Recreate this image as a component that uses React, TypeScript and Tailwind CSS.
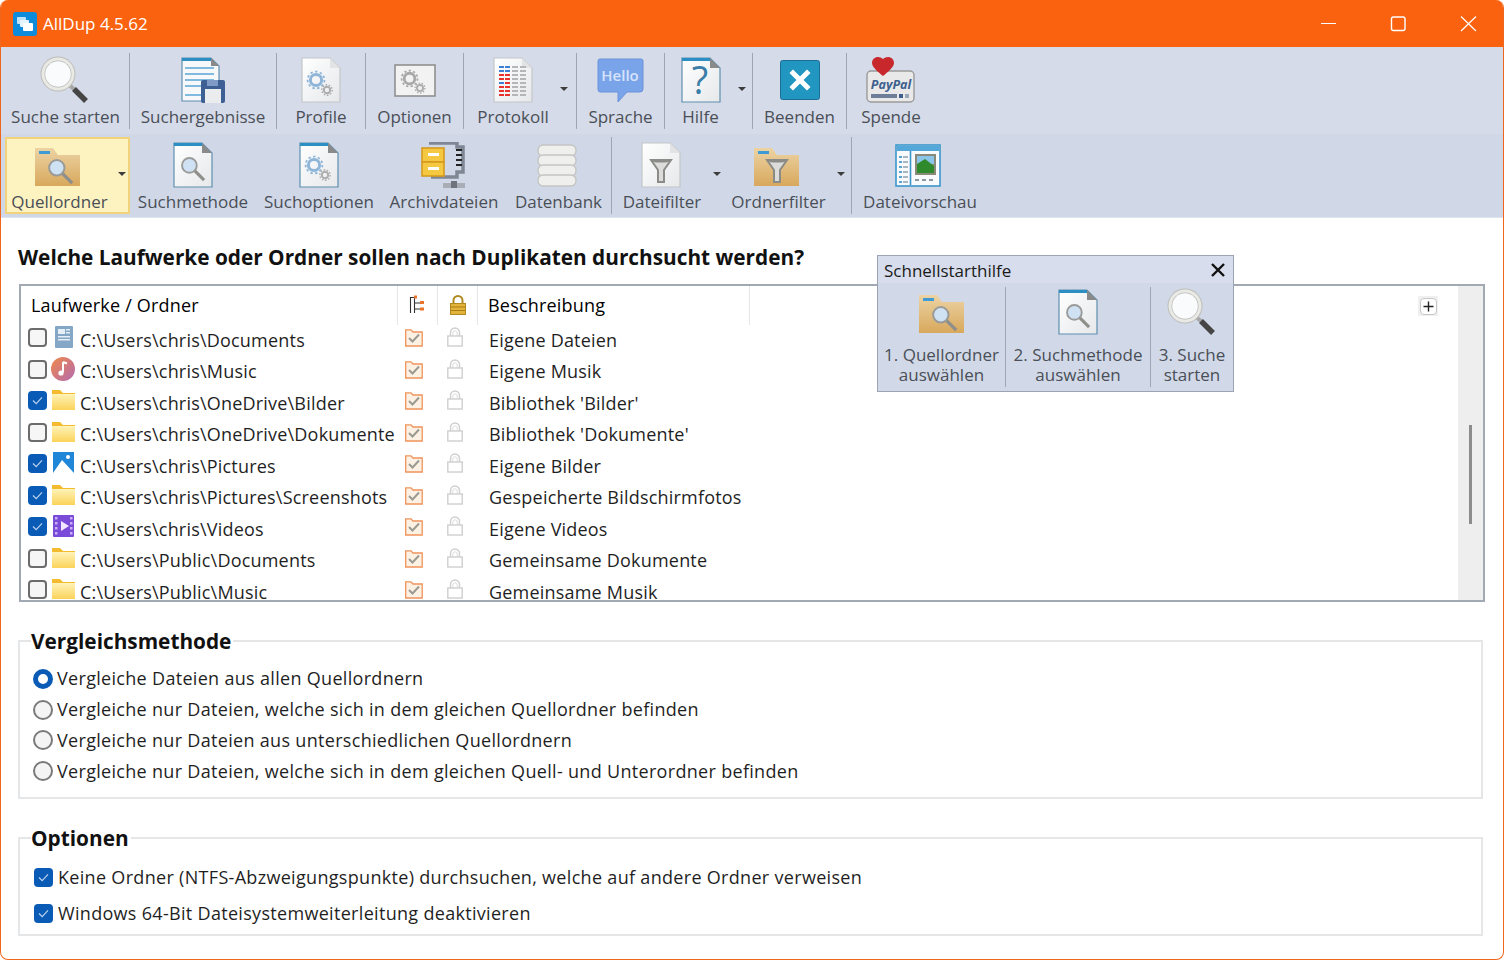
import React from "react";

// ---- toolbar icons ----
const Magnifier = ({ s = 50 }: { s?: number }) => (
  <svg width={s} height={s} viewBox="0 0 50 50">
    <line x1="28" y1="29" x2="35" y2="35" stroke="#a8a8a8" strokeWidth="4" />
    <line x1="34" y1="34" x2="46" y2="46" stroke="#454545" strokeWidth="5.5" />
    <circle cx="18" cy="19" r="17.5" fill="#bdbdb9" />
    <circle cx="18" cy="19" r="16.5" fill="#e9e9e6" />
    <circle cx="18" cy="19" r="13.5" fill="#b9b9b6" />
    <circle cx="18" cy="19" r="12.8" fill="#fafbfc" />
  </svg>
);

const MiniGlass = ({ x, y, k = 1 }: { x: number; y: number; k?: number }) => (
  <g transform={`translate(${x} ${y}) scale(${k})`}>
    <line x1="13" y1="13" x2="22" y2="22" stroke="#8e8e8a" strokeWidth="3" />
    <circle cx="8" cy="8" r="7" fill="#cfe2f4" stroke="#9a9a98" strokeWidth="1.8" />
  </g>
);

const Gears = ({ x, y, c = "#8fb6d8", k = 1 }: { x: number; y: number; c?: string; k?: number }) => (
  <g transform={`translate(${x} ${y}) scale(${k})`} fill="none">
    <circle cx="9" cy="9" r="5.6" stroke={c} strokeWidth="3" />
    <circle cx="9" cy="9" r="8.4" stroke={c} strokeWidth="1.8" strokeDasharray="2.4 2.4" />
    <circle cx="20" cy="19" r="3.2" stroke="#adadad" strokeWidth="2" />
    <circle cx="20" cy="19" r="5.2" stroke="#adadad" strokeWidth="1.4" strokeDasharray="1.6 1.6" />
  </g>
);

const PageBase = ({ blue = false, children }: { blue?: boolean; children?: React.ReactNode }) => (
  <svg width="40" height="46" viewBox="0 0 40 46">
    <defs>
      <linearGradient id="pg" x1="0" y1="0" x2="1" y2="1">
        <stop offset="0" stopColor="#ffffff" />
        <stop offset="1" stopColor="#e6e8ea" />
      </linearGradient>
    </defs>
    <path d="M1 1H29L39 11V45H1Z" fill="url(#pg)" stroke={blue ? "#5f8fb0" : "#c4c6c8"} strokeWidth="1.2" />
    {blue && <rect x="1" y="1" width="28" height="3" fill="#2c8fc4" />}
    <path d="M29 1L39 11H29Z" fill={blue ? "#8a8a8a" : "#e2e3e5"} />
    {children}
  </svg>
);

const FolderBase = ({ children }: { children?: React.ReactNode }) => (
  <svg className="mt-[4px]" width="46" height="39" viewBox="0 0 46 39">
    <defs>
      <linearGradient id="fd" x1="0" y1="0" x2="0" y2="1">
        <stop offset="0" stopColor="#ecd3a4" />
        <stop offset="1" stopColor="#d8a85c" />
      </linearGradient>
    </defs>
    <path d="M0 0H18L23 7H45V38H0Z" fill="url(#fd)" />
    <rect x="4" y="3" width="11" height="3" fill="#3f9bd6" />
    {children}
  </svg>
);

const Funnel = ({ x, y }: { x: number; y: number }) => (
  <g transform={`translate(${x} ${y})`}>
    <path d="M0 1H20L13 11V23H7V11Z" fill="#dcdcda" stroke="#8b8b88" strokeWidth="2" />
    <ellipse cx="10" cy="2" rx="9" ry="1.6" fill="#8b8b88" />
  </g>
);

const IconSave = () => (
  <svg width="44" height="46" viewBox="0 0 44 46">
    <path d="M1 1H30L38 9V44H1Z" fill="#f7f8f9" stroke="#5f8fb0" strokeWidth="1.2" />
    <rect x="1" y="1" width="29" height="3" fill="#2c8fc4" />
    <path d="M30 1L38 9H30Z" fill="#8a8a8a" />
    {[11, 17, 23, 29, 38].map((y) => (
      <line key={y} x1="4" y1={y} x2={y > 30 ? 20 : 33} y2={y} stroke="#58a6d4" strokeWidth="1.5" />
    ))}
    <rect x="20" y="23" width="24" height="23" rx="2" fill="#3d5f94" />
    <rect x="26" y="23" width="11" height="6" fill="#7f9ac6" />
    <rect x="24" y="32" width="16" height="14" fill="#ebecee" />
  </svg>
);

const IconOptions = () => (
  <svg width="42" height="33" viewBox="0 0 42 33">
    <rect x="1" y="1" width="40" height="31" fill="#f2f2f2" stroke="#8f8f8f" strokeWidth="1.6" />
    <Gears x={7} y={6} c="#a8a8a8" k={0.95} />
  </svg>
);

const IconLog = () => (
  <PageBase>
    {[9, 13, 17, 21, 25, 29, 33, 37].map((y, i) => (
      <g key={y}>
        <rect x="6" y={y} width="5" height="2" fill={i < 2 || i === 4 ? "#3b7fd6" : "#e8322c"} />
        <rect x="12" y={y} width="5" height="2" fill={i < 2 ? "#3b7fd6" : "#e8322c"} />
        <rect x="19" y={y} width="6" height="2" fill="#b6b6b6" />
        <rect x="27" y={y} width="6" height="2" fill="#b6b6b6" />
      </g>
    ))}
  </PageBase>
);

const IconHello = () => (
  <svg width="47" height="45" viewBox="0 0 47 45">
    <path d="M3 1H44Q46 1 46 3V31Q46 34 43 34H30L21 44V34H3Q1 34 1 31V3Q1 1 3 1Z" fill="#7aa4ea" stroke="#6a92da" />
    <text x="23" y="23" textAnchor="middle" fontSize="15" fontWeight="600" fill="#d6e3f9" fontFamily="'Open Sans', sans-serif">
      Hello
    </text>
  </svg>
);

const IconExit = () => (
  <svg width="40" height="40" viewBox="0 0 40 40">
    <rect x="0.5" y="0.5" width="39" height="39" rx="2" fill="#2196c0" stroke="#1b6f92" />
    <path d="M13 13L27 27M27 13L13 27" stroke="#fff" strokeWidth="5" strokeLinecap="square" />
  </svg>
);

const IconPaypal = () => (
  <svg width="50" height="48" viewBox="0 0 50 48">
    <rect x="1" y="15" width="47" height="31" rx="4" fill="#e9e9e9" stroke="#9a9a9a" strokeWidth="1.4" />
    <text x="25" y="33" textAnchor="middle" fontSize="12.5" fontWeight="700" fontStyle="italic" fill="#3e5f8e" fontFamily="'Open Sans', sans-serif">
      PayPal
    </text>
    <rect x="5" y="38" width="26" height="4" fill="#6d7f98" />
    <rect x="33" y="38" width="4" height="4" fill="#3e5f8e" />
    <rect x="39" y="38" width="4" height="4" fill="#9aa7b8" />
    <path d="M20 3C16-1 9 1 9 7C9 11 15 16 20 20C25 16 31 11 31 7C31 1 24-1 20 3Z" transform="translate(-3 0)" fill="#c8282c" />
  </svg>
);

const IconCabinet = () => (
  <svg width="46" height="46" viewBox="0 0 46 46">
    <path d="M8 1H36V5H42V30H36V35H10" fill="none" stroke="#7f8794" strokeWidth="3.5" />
    <path d="M35 8H41M35 13H41M35 18H41M35 23H41" stroke="#222" strokeWidth="2" />
    <rect x="1" y="6" width="22" height="14" fill="#f5c842" stroke="#d69a1e" strokeWidth="1.6" />
    <rect x="1" y="20" width="22" height="14" fill="#f5c842" stroke="#d69a1e" strokeWidth="1.6" />
    <rect x="7" y="11" width="11" height="3" fill="#fff" />
    <rect x="7" y="25" width="11" height="3" fill="#fff" />
    <rect x="22" y="41" width="22" height="5" fill="#a9aeb6" />
    <rect x="30" y="39" width="6" height="7" fill="#6f747c" />
  </svg>
);

const IconDb = () => (
  <svg width="40" height="43" viewBox="0 0 40 43">
    {[1, 11, 21, 31].map((y) => (
      <rect key={y} x="1" y={y} width="38" height="11" rx="5" fill="#efefed" stroke="#c4c5c3" strokeWidth="1.4" />
    ))}
  </svg>
);

const IconPreview = () => (
  <svg width="46" height="43" viewBox="0 0 46 43">
    <rect x="1" y="1" width="44" height="41" fill="#f8fafc" stroke="#3a97cb" strokeWidth="1.6" />
    <rect x="2" y="2" width="42" height="5" fill="#53a8d9" />
    <line x1="15.5" y1="7" x2="15.5" y2="41" stroke="#3a97cb" strokeWidth="1.6" />
    {[12, 17, 22, 27, 32, 37].map((y) => (
      <g key={y}>
        <rect x="4" y={y} width="3" height="2" fill="#5aa5d6" />
        <rect x="8" y={y} width="5" height="2" fill="#a9b6c2" />
      </g>
    ))}
    <rect x="20" y="10" width="21" height="21" fill="#8a8a7a" />
    <rect x="22" y="12" width="17" height="8" fill="#8cc5ea" />
    <path d="M22 20L30 15L39 22V29H22Z" fill="#2f8a2c" />
    <rect x="20" y="35" width="4" height="2" fill="#8a96a2" />
    <rect x="27" y="35" width="4" height="2" fill="#8a96a2" />
    <rect x="34" y="35" width="4" height="2" fill="#8a96a2" />
  </svg>
);

const FolderSearch = () => (
  <FolderBase>
    <MiniGlass x={13} y={11} k={1.1} />
  </FolderBase>
);
const DocSearch = () => (
  <PageBase blue>
    <MiniGlass x={8} y={15} k={1.05} />
  </PageBase>
);

type Tool = { label: string; w: number; icon: React.ReactNode; pr?: number; arrow?: number; sep?: boolean; active?: boolean; nudge?: string };

const row1: Tool[] = [
  { label: "Suche starten", w: 127, icon: <Magnifier />, sep: true, nudge: "-translate-x-[1px]" },
  { label: "Suchergebnisse", w: 146, icon: <IconSave />, sep: true },
  { label: "Profile", w: 88, icon: <PageBase><Gears x={6} y={14} /></PageBase>, sep: true },
  { label: "Optionen", w: 97, icon: <IconOptions />, sep: true },
  { label: "Protokoll", w: 112, icon: <IconLog />, pr: 14, arrow: 6, sep: true },
  { label: "Sprache", w: 87, icon: <IconHello />, sep: true },
  { label: "Hilfe", w: 87, icon: <PageBase blue><text x="19" y="37" textAnchor="middle" fontSize="38" fill="#3a7ea8" fontFamily="'Open Sans', sans-serif">?</text></PageBase>, pr: 16, arrow: 4, sep: true },
  { label: "Beenden", w: 93, icon: <IconExit />, sep: true },
  { label: "Spende", w: 88, icon: <IconPaypal /> },
];

const row2: Tool[] = [
  { label: "Quellordner", w: 125, icon: <FolderSearch />, pr: 16, arrow: 2, active: true, nudge: "-translate-x-[2px]" },
  { label: "Suchmethode", w: 126, icon: <DocSearch /> },
  { label: "Suchoptionen", w: 126, icon: <PageBase blue><Gears x={6} y={14} /></PageBase> },
  { label: "Archivdateien", w: 124, icon: <IconCabinet /> },
  { label: "Datenbank", w: 105, icon: <IconDb />, sep: true, nudge: "-translate-x-[2px]" },
  { label: "Dateifilter", w: 115, icon: <PageBase><Funnel x={10} y={17} /></PageBase>, pr: 15, arrow: 4, nudge: "-translate-x-[1px]" },
  { label: "Ordnerfilter", w: 124, icon: <FolderBase><Funnel x={13} y={11} /></FolderBase>, pr: 21, arrow: 4, sep: true, nudge: "-translate-x-[2px]" },
  { label: "Dateivorschau", w: 136, icon: <IconPreview />, nudge: "-translate-x-[2px]" },
];

const ToolItem = ({ t, second }: { t: Tool; second?: boolean }) => (
  <>
    <div
      className={`relative shrink-0 flex flex-col items-center box-border ${second ? "pt-[1px]" : "pt-[6px]"} ${t.active ? "bg-[#fdf3c0] border-2 border-[#f3d27c]" : "border-2 border-transparent"}`}
      style={{ width: t.w, paddingRight: t.pr ?? 0 }}
    >
      <div className={`h-[50px] shrink-0 flex items-center justify-center ${t.nudge ?? ""}`}>{t.icon}</div>
      <span className="text-[#4a4f57] leading-[24px] whitespace-nowrap">{t.label}</span>
      {t.arrow !== undefined && (
        <span
          className={`absolute w-0 h-0 border-x-[4px] border-x-transparent border-t-[4px] border-t-[#3c3c3c] ${second ? "top-[33px]" : "top-[38px]"}`}
          style={{ right: t.arrow }}
        />
      )}
    </div>
    {t.sep && <div className={`w-[1px] shrink-0 bg-[#9ca6b5] ${second ? "" : "mt-[6px] mb-[5px]"}`} />}
  </>
);

// ---- list ----
const SmallFolder = () => (
  <svg width="25" height="22" viewBox="0 0 25 22">
    <defs>
      <linearGradient id="yf" x1="0" y1="0" x2="0" y2="1">
        <stop offset="0" stopColor="#fff3b8" />
        <stop offset="1" stopColor="#fbd35a" />
      </linearGradient>
    </defs>
    <path d="M1 1H9L12 4H24V21H1Z" fill="#f5bb2f" />
    <rect x="1" y="5" width="23" height="16" fill="url(#yf)" />
  </svg>
);

const SmallDocs = () => (
  <svg width="25" height="24" viewBox="0 0 25 24">
    <rect x="4" y="1" width="18" height="22" rx="1" fill="#85a7c6" />
    <rect x="7" y="4" width="7" height="5" fill="#e6eef6" />
    <rect x="15" y="4" width="4" height="1.5" fill="#e6eef6" />
    <rect x="15" y="7" width="4" height="1.5" fill="#e6eef6" />
    <rect x="7" y="11" width="12" height="1.5" fill="#e6eef6" />
    <rect x="7" y="14" width="12" height="1.5" fill="#e6eef6" />
  </svg>
);

const SmallMusic = () => (
  <svg width="25" height="24" viewBox="0 0 25 24">
    <defs>
      <linearGradient id="mu" x1="0" y1="0" x2="1" y2="1">
        <stop offset="0" stopColor="#f08a4a" />
        <stop offset="1" stopColor="#b46ab0" />
      </linearGradient>
    </defs>
    <circle cx="12" cy="12" r="12" fill="url(#mu)" />
    <path d="M12 5V15.5M12 5L16 6.5" stroke="#fff" strokeWidth="2" fill="none" />
    <circle cx="10" cy="16" r="2.6" fill="#fff" />
  </svg>
);

const SmallPics = () => (
  <svg width="25" height="24" viewBox="0 0 25 24">
    <rect x="2" y="1" width="21" height="21" fill="#1f86d8" />
    <circle cx="17" cy="6" r="2" fill="#fff" />
    <path d="M2 22L11 9L23 22Z" fill="#fff" />
  </svg>
);

const SmallVideo = () => (
  <svg width="25" height="24" viewBox="0 0 25 24">
    <rect x="2" y="1" width="21" height="22" rx="1" fill="#7a4ad8" />
    <path d="M10 7L18 12L10 17Z" fill="#f0e6ff" />
    {[3, 8, 13, 18].map((y) => (
      <g key={y}>
        <rect x="4" y={y} width="2.5" height="2.5" fill="#c8b0f4" />
        <rect x="19" y={y} width="2.5" height="2.5" fill="#c8b0f4" />
      </g>
    ))}
  </svg>
);

const FolderCheck = () => (
  <svg width="18" height="18" viewBox="0 0 18 18">
    <path d="M0.7 5V0.8H6L8 3H17.2V17H0.7Z" fill="#fdf1e4" stroke="#f0935a" strokeWidth="1.3" />
    <path d="M4 9L7.5 12.5L14 5.5" fill="none" stroke="#9a9a92" strokeWidth="2" />
  </svg>
);

const GreyLock = () => (
  <svg width="16" height="20" viewBox="0 0 16 20">
    <path d="M3.5 9V5.5A4.5 4.5 0 0 1 12.5 5.5V9" fill="none" stroke="#cfcfcf" strokeWidth="1.4" />
    <path d="M5.8 9V6A2.2 2.2 0 0 1 10.2 6V9" fill="none" stroke="#dddddd" strokeWidth="1" />
    <rect x="0.8" y="9" width="14.4" height="10" fill="#fff" stroke="#cfcfcf" strokeWidth="1.4" />
  </svg>
);

const CheckBox = ({ on }: { on: boolean }) =>
  on ? (
    <span className="inline-flex w-[19px] h-[19px] rounded-[4px] bg-[#0a5bb5] items-center justify-center shrink-0">
      <svg width="13" height="13" viewBox="0 0 13 13">
        <path d="M2 6.5L5.2 9.6L11 3.4" fill="none" stroke="#b9d2ee" strokeWidth="1.2" />
      </svg>
    </span>
  ) : (
    <span className="inline-block w-[19px] h-[19px] rounded-[4px] border-2 border-[#6c6c6c] bg-[#f6f6f6] box-border shrink-0" />
  );

const rows: { on: boolean; icon: React.ReactNode; path: string; desc: string }[] = [
  { on: false, icon: <SmallDocs />, path: "C:\\Users\\chris\\Documents", desc: "Eigene Dateien" },
  { on: false, icon: <SmallMusic />, path: "C:\\Users\\chris\\Music", desc: "Eigene Musik" },
  { on: true, icon: <SmallFolder />, path: "C:\\Users\\chris\\OneDrive\\Bilder", desc: "Bibliothek 'Bilder'" },
  { on: false, icon: <SmallFolder />, path: "C:\\Users\\chris\\OneDrive\\Dokumente", desc: "Bibliothek 'Dokumente'" },
  { on: true, icon: <SmallPics />, path: "C:\\Users\\chris\\Pictures", desc: "Eigene Bilder" },
  { on: true, icon: <SmallFolder />, path: "C:\\Users\\chris\\Pictures\\Screenshots", desc: "Gespeicherte Bildschirmfotos" },
  { on: true, icon: <SmallVideo />, path: "C:\\Users\\chris\\Videos", desc: "Eigene Videos" },
  { on: false, icon: <SmallFolder />, path: "C:\\Users\\Public\\Documents", desc: "Gemeinsame Dokumente" },
  { on: false, icon: <SmallFolder />, path: "C:\\Users\\Public\\Music", desc: "Gemeinsame Musik" },
];

const Radio = ({ on }: { on: boolean }) =>
  on ? (
    <span className="inline-block w-[20px] h-[20px] rounded-full border-[5px] border-[#0a5bb5] bg-white box-border shrink-0" />
  ) : (
    <span className="inline-block w-[20px] h-[20px] rounded-full border-2 border-[#7a7a7a] bg-[#f4f4f4] box-border shrink-0" />
  );

const RadioRow = ({ on, text, h }: { on: boolean; text: string; h: string }) => (
  <div className={`flex items-center pl-[13px] ${h}`}>
    <Radio on={on} />
    <span className="ml-[4px] text-[18px] tracking-[0.31px] text-[#1f1f1f] whitespace-nowrap">{text}</span>
  </div>
);

const QuickCell = ({ w, icon, a, b, sep }: { w: number; icon: React.ReactNode; a: string; b: string; sep?: boolean }) => (
  <>
    <div className="shrink-0 flex flex-col items-center" style={{ width: w }}>
      <div className="h-[50px] flex items-center justify-center">{icon}</div>
      <span className="text-[#4a4f57] leading-[20px] mt-[8px] whitespace-nowrap">{a}</span>
      <span className="text-[#4a4f57] leading-[20px] whitespace-nowrap">{b}</span>
    </div>
    {sep && <div className="w-[1px] shrink-0 bg-[#9ca6b5]" />}
  </>
);

export default function App() {
  return (
    <div className="w-[1504px] h-[960px] box-border overflow-hidden relative bg-white border-x border-b border-[#f0661c] rounded-[8px] font-['Open_Sans',sans-serif] text-[17px]">
      {/* title bar */}
      <div className="h-[47px] bg-[#fa620f] flex items-center text-white">
        <svg className="ml-[12px]" width="24" height="24" viewBox="0 0 24 24">
          <rect width="24" height="24" rx="3" fill="#0f8bdc" />
          <rect x="4" y="5" width="9" height="7" rx="1" fill="#bfe2f8" />
          <rect x="7" y="8" width="9" height="7" rx="1" fill="#e6f4fd" />
          <rect x="10" y="11" width="10" height="8" rx="1" fill="#ffffff" />
        </svg>
        <span className="ml-[6px] text-[17px]">AllDup 4.5.62</span>
        <div className="ml-auto flex items-center">
          <svg width="70" height="47" viewBox="0 0 70 47"><line x1="28" y1="23.5" x2="43" y2="23.5" stroke="#fff" strokeWidth="1" /></svg>
          <svg width="70" height="47" viewBox="0 0 70 47"><rect x="28.5" y="17" width="13.5" height="13.5" rx="2" fill="none" stroke="#fff" strokeWidth="1.4" /></svg>
          <svg width="70" height="47" viewBox="0 0 70 47"><path d="M28 16.5L43 31M43 16.5L28 31" stroke="#fff" strokeWidth="1.2" /></svg>
        </div>
      </div>

      {/* toolbars */}
      <div className="h-[87px] bg-[#d5dbe9] flex pl-[1px]">
        {row1.map((t) => <ToolItem key={t.label} t={t} />)}
      </div>
      <div className="h-[84px] bg-[#d0d8e7] flex pl-[4px] pt-[3px] pb-[3px] box-border border-b border-[#dfe4ee]">
        {row2.map((t) => <ToolItem key={t.label} t={t} second />)}
      </div>

      {/* main */}
      <div className="ml-[17px] mr-[18px]">
        <h1 className="mt-[24px] h-[30px] leading-[30px] text-[20.8px] font-bold text-[#111] whitespace-nowrap">
          Welche Laufwerke oder Ordner sollen nach Duplikaten durchsucht werden?
        </h1>

        <div className="mt-[12px] ml-[1px] h-[318px] box-border border-2 border-[#a3a9b2] flex relative text-[18px] tracking-[0.2px]">
          <div className="flex-1 overflow-hidden">
            <div className="h-[38.5px] flex items-center">
              <div className="w-[377px] shrink-0 h-full pl-[10px] leading-[38px] border-r border-[#e6e6e6]">Laufwerke / Ordner</div>
              <div className="w-[40px] shrink-0 h-full flex items-center justify-center border-r border-[#e6e6e6]">
                <svg width="18" height="20" viewBox="0 0 18 20">
                  <path d="M1.5 18V2.5H5.5V18M5.5 8H11M5.5 14H11" fill="none" stroke="#333" strokeWidth="1.1" />
                  <rect x="5" y="0.5" width="3" height="3" fill="#e8742c" />
                  <rect x="11" y="6" width="4" height="3" fill="#e8742c" />
                  <rect x="11" y="12.5" width="4" height="3" fill="#e8742c" />
                </svg>
              </div>
              <div className="w-[40px] shrink-0 h-full flex items-center justify-center border-r border-[#e6e6e6]">
                <svg width="16" height="20" viewBox="0 0 16 20">
                  <path d="M3.5 9V5.5A4.5 4.5 0 0 1 12.5 5.5V9" fill="none" stroke="#b08a1e" strokeWidth="2" />
                  <rect x="0.5" y="8.5" width="15" height="11" fill="#e2b23a" stroke="#b08a1e" />
                  <path d="M1 12H15M1 15.5H15" stroke="#a87f14" strokeWidth="1" />
                </svg>
              </div>
              <div className="w-[272px] shrink-0 h-full pl-[10px] leading-[38px] border-r border-[#e6e6e6]">Beschreibung</div>
            </div>
            <div className="h-[275.5px] overflow-hidden text-[#1f1f1f]">
              {rows.map((r) => (
                <div key={r.path} className="h-[31.5px] flex items-center">
                  <div className="w-[377px] shrink-0 flex items-center pl-[7px]">
                    <span className="-mt-[5px] flex items-center">
                      <CheckBox on={r.on} />
                      <span className="ml-[4px] w-[25px] h-[24px] flex items-center justify-center -mt-[1px]">{r.icon}</span>
                    </span>
                    <span className="ml-[4px] whitespace-nowrap">{r.path}</span>
                  </div>
                  <div className="w-[40px] shrink-0 pl-[7px] -mt-[4px] flex"><FolderCheck /></div>
                  <div className="w-[40px] shrink-0 pl-[9px] -mt-[6px] flex"><GreyLock /></div>
                  <div className="pl-[11px] whitespace-nowrap">{r.desc}</div>
                </div>
              ))}
            </div>
          </div>
          <div className="w-[25px] shrink-0 bg-[#eeeeee] flex justify-center">
            <div className="w-[3px] h-[99px] mt-[139px] bg-[#8c8c8c]" />
          </div>
          {/* add button */}
          <div className="absolute right-[45px] top-[10px] w-[20px] h-[20px] bg-[#f0f0f0] flex items-center justify-center">
            <span className="w-[17px] h-[17px] rounded-[4px] bg-white border border-[#c8c8c8] box-border flex items-center justify-center">
              <svg width="11" height="11" viewBox="0 0 11 11"><path d="M5.5 0.5V10.5M0.5 5.5H10.5" stroke="#222" strokeWidth="1.4" /></svg>
            </span>
          </div>
        </div>

        <fieldset className="mt-[26px] mr-[2px] h-[171px] border-2 border-[#e4e6e8]">
          <legend className="ml-[11px] pr-[2px] text-[20.8px] leading-[26px] font-bold text-[#111]">Vergleichsmethode</legend>
          <div className="pt-[9px]">
            <RadioRow on text="Vergleiche Dateien aus allen Quellordnern" h="h-[31px]" />
            <RadioRow on={false} text="Vergleiche nur Dateien, welche sich in dem gleichen Quellordner befinden" h="h-[31px]" />
            <RadioRow on={false} text="Vergleiche nur Dateien aus unterschiedlichen Quellordnern" h="h-[30px]" />
            <RadioRow on={false} text="Vergleiche nur Dateien, welche sich in dem gleichen Quell- und Unterordner befinden" h="h-[32px]" />
          </div>
        </fieldset>

        <fieldset className="mt-[26px] mr-[2px] h-[111px] border-2 border-[#e4e6e8]">
          <legend className="ml-[11px] pr-[2px] text-[20.8px] leading-[26px] font-bold text-[#111]">Optionen</legend>
          <div className="pt-[10px] pl-[14px] flex flex-col gap-[4px] text-[18px] tracking-[0.31px] text-[#1f1f1f]">
            <div className="h-[32px] flex items-center"><CheckBox on /><span className="ml-[5px] whitespace-nowrap">Keine Ordner (NTFS-Abzweigungspunkte) durchsuchen, welche auf andere Ordner verweisen</span></div>
            <div className="h-[32px] flex items-center"><CheckBox on /><span className="ml-[5px] whitespace-nowrap">Windows 64-Bit Dateisystemweiterleitung deaktivieren</span></div>
          </div>
        </fieldset>
      </div>

      {/* floating quick start panel */}
      <div className="absolute left-[876px] top-[255px] w-[357px] h-[137px] box-border border border-[#9aa4b2] bg-[#d1d9e8]">
        <div className="h-[27px] bg-[#d7ddec] flex items-center justify-between pl-[6px] pr-[6px] text-[#1a1a1a]">
          <span className="mt-[2px]">Schnellstarthilfe</span>
          <svg width="18" height="18" viewBox="0 0 18 18"><path d="M3 3L15 15M15 3L3 15" stroke="#111" strokeWidth="2.4" /></svg>
        </div>
        <div className="h-[100px] mt-[4px] flex">
          <QuickCell w={127} icon={<FolderSearch />} a="1. Quellordner" b="auswählen" sep />
          <QuickCell w={144} icon={<DocSearch />} a="2. Suchmethode" b="auswählen" sep />
          <QuickCell w={82} icon={<Magnifier />} a="3. Suche" b="starten" />
        </div>
      </div>
    </div>
  );
}
